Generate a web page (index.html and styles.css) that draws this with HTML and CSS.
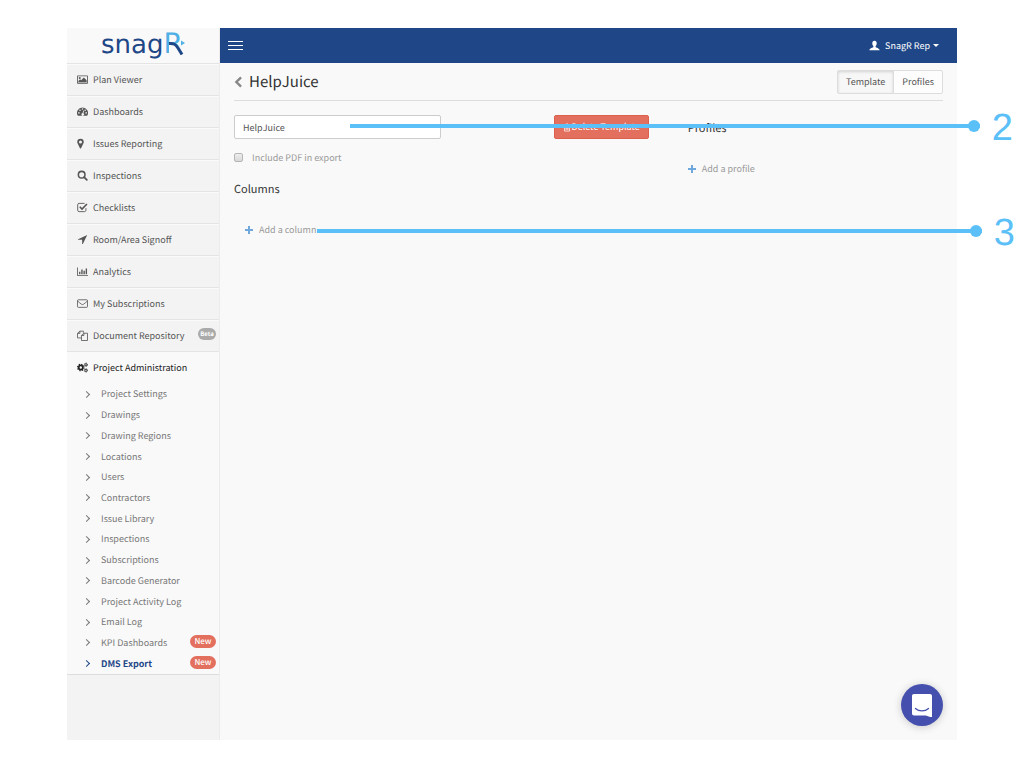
FILE: index.html
```html
<!DOCTYPE html>
<html lang="en">
<head>
    <meta charset="UTF-8">
    <meta name="viewport" content="width=device-width, initial-scale=1.0">
    <title>DMS Export - HelpJuice</title>
    <link rel="stylesheet" href="styles.css">
</head>
<body>
    <div class="app">
        <aside class="sidebar">
            <a class="logo" href="#">
                <span class="logo-snag">snag</span><span class="logo-r">R<svg class="logo-mark" viewBox="0 0 24 24"><path d="M6 13h9l7 11H6z" fill="#f9f9f9"/><path d="M6 11.500c5-.5 7 1 9 4.500l4 6.500" stroke="#1f4788" stroke-width="3" fill="none"/><path d="M18 8.500l4 2.500-4 2.500z" fill="#4fb0e5"/></svg></span>
            </a>
            <nav>
                <a class="nav-item" href="#"><svg class="icon" viewBox="0 0 16 16"><path fill-rule="evenodd" d="M1.500 2h13c.8 0 1.500.6 1.500 1.400v9.200c0 .8-.7 1.400-1.500 1.400h-13C.7 14 0 13.400 0 12.600V3.400C0 2.600.7 2 1.500 2zM1.200 3.200v9.600h13.600V3.200z"/><circle cx="4" cy="5.800" r="1.500"/><path d="M2 12V10l2.500-2.500L6 9l4-4 4 4v3z"/></svg>Plan Viewer</a>
                <a class="nav-item" href="#"><svg class="icon" viewBox="0 0 16 16"><path d="M8 2a8 8 0 0 0-6.700 12.300h13.400A8 8 0 0 0 8 2z"/><g fill="#f3f3f3"><circle cx="2.800" cy="10" r="1.100"/><circle cx="4.400" cy="6.200" r="1.100"/><circle cx="8" cy="4.500" r="1.100"/><circle cx="11.800" cy="6.200" r="1.100"/><circle cx="13.300" cy="10" r="1.100"/><path d="M9.300 6.500l1 .3-1 3.600a2 2 0 1 1-1.200-.2z"/></g></svg>Dashboards</a>
                <a class="nav-item" href="#"><svg class="icon icon-left" viewBox="0 0 16 16"><path fill-rule="evenodd" d="M8 1a4.700 4.700 0 0 0-4.700 4.700c0 1.300.4 2 .8 2.800L7.200 15c.3.600 1.300.6 1.600 0l3.100-6.500c.4-.8.8-1.500.8-2.800A4.700 4.700 0 0 0 8 1zm0 2.500a2.200 2.200 0 1 1 0 4.400 2.200 2.200 0 0 1 0-4.400z"/></svg>Issues Reporting</a>
                <a class="nav-item" href="#"><svg class="icon" viewBox="0 0 16 16"><circle cx="6.800" cy="6.800" r="4.800" fill="none" stroke="currentColor" stroke-width="2.200"/><path d="M10.300 10.300l4 4" stroke="currentColor" stroke-width="2.600" stroke-linecap="round"/></svg>Inspections</a>
                <a class="nav-item" href="#"><svg class="icon" viewBox="0 0 16 16"><path d="M13 9v3c0 1.200-.8 2-2 2H3c-1.200 0-2-.8-2-2V4c0-1.200.8-2 2-2h8" fill="none" stroke="currentColor" stroke-width="1.300"/><path d="M4 7l3.300 3.300L14.500 3" fill="none" stroke="currentColor" stroke-width="2.300"/></svg>Checklists</a>
                <a class="nav-item" href="#"><svg class="icon" viewBox="0 0 16 16"><path d="M14.800 1.500L8.500 14.400c-.3.500-1 .4-1-.2V8.500H1.800c-.6 0-.7-.8-.2-1z"/></svg>Room/Area Signoff</a>
                <a class="nav-item" href="#"><svg class="icon" viewBox="0 0 16 16"><path d="M0 2h1.200v11H16v1.200H0zM3 8.500h2V12H3zM6.200 5h2v7h-2zM9.400 7h2v5h-2zM12.600 3.500h2V12h-2z"/></svg>Analytics</a>
                <a class="nav-item" href="#"><svg class="icon" viewBox="0 0 16 16"><rect x=".7" y="2.600" width="14.600" height="11" rx="1.300" fill="none" stroke="currentColor" stroke-width="1.200"/><path d="M1 4.500c2 2.100 4.200 3.500 5.600 4.600.8.6 2 .6 2.800 0C10.800 8 13 6.600 15 4.500" fill="none" stroke="currentColor" stroke-width="1.200"/></svg>My Subscriptions</a>
                <a class="nav-item" href="#"><svg class="icon" viewBox="0 0 16 16"><path d="M6 11.500H.7V5L4 1.700h5.300V4M4.200 1.700V5H.7M6.500 8l3.300-3.300h5.500v10.600H6.500zM10 4.700V8H6.500" fill="none" stroke="currentColor" stroke-width="1.200"/></svg>Document Repository<span class="badge badge-beta">Beta</span></a>
                <a class="nav-item nav-open" href="#"><svg class="icon" viewBox="0 0 16 16"><circle cx="5.500" cy="8" r="3" fill="none" stroke="currentColor" stroke-width="2.500"/><circle cx="5.500" cy="8" r="4.800" fill="none" stroke="currentColor" stroke-width="1.500" stroke-dasharray="2 1.770"/><circle cx="13" cy="4" r="1.600" fill="none" stroke="currentColor" stroke-width="1.300"/><circle cx="13" cy="4" r="2.600" fill="none" stroke="currentColor" stroke-dasharray="1.300 1.400"/><circle cx="13" cy="12.200" r="1.600" fill="none" stroke="currentColor" stroke-width="1.300"/><circle cx="13" cy="12.200" r="2.600" fill="none" stroke="currentColor" stroke-dasharray="1.300 1.400"/></svg>Project Administration</a>
                <ul class="subnav">
                    <li><a href="#">Project Settings</a></li>
                    <li><a href="#">Drawings</a></li>
                    <li><a href="#">Drawing Regions</a></li>
                    <li><a href="#">Locations</a></li>
                    <li><a href="#">Users</a></li>
                    <li><a href="#">Contractors</a></li>
                    <li><a href="#">Issue Library</a></li>
                    <li><a href="#">Inspections</a></li>
                    <li><a href="#">Subscriptions</a></li>
                    <li><a href="#">Barcode Generator</a></li>
                    <li><a href="#">Project Activity Log</a></li>
                    <li><a href="#">Email Log</a></li>
                    <li><a href="#">KPI Dashboards<span class="badge badge-new">New</span></a></li>
                    <li><a class="active" href="#">DMS Export<span class="badge badge-new">New</span></a></li>
                </ul>
            </nav>
        </aside>

        <div class="page">
            <header class="topbar">
                <button class="menu-toggle" type="button" aria-label="Toggle menu"><span></span><span></span><span></span></button>
                <button class="user-menu" type="button"><svg class="user-icon" viewBox="0 0 16 16"><path d="M8 1C5.800 1 4.800 2.600 4.800 4.800c0 1.800.6 3.200 1.600 4v1.400c-.3.900-5.600 1.500-5.900 4.800h15c-.3-3.300-5.600-3.900-5.900-4.800V8.800c1-.8 1.600-2.200 1.600-4C11.200 2.600 10.200 1 8 1z"/></svg>SnagR Rep<span class="caret"></span></button>
            </header>

            <main class="content">
                <div class="title-row">
                    <a class="back" href="#" aria-label="Back"><svg viewBox="0 0 10 14"><path d="M8 1.500L2.500 7 8 12.500" fill="none" stroke="currentColor" stroke-width="2.800"/></svg></a>
                    <h1>HelpJuice</h1>
                    <div class="btn-group">
                        <button class="btn pressed" type="button">Template</button>
                        <button class="btn" type="button">Profiles</button>
                    </div>
                </div>

                <div class="columns">
                    <section class="template">
                        <div class="name-row">
                            <input class="name-input" type="text" value="HelpJuice" aria-label="Template name">
                            <button class="btn-danger" type="button"><svg viewBox="0 0 14 16"><path d="M1 4h12M4.500 4l.8-2.300h3.400L9.500 4M2.500 4v10.300h9V4M5.300 6.500v5.500M7 6.500v5.500M8.700 6.500v5.500" fill="none" stroke="currentColor" stroke-width="1.300"/></svg>Delete Template</button>
                        </div>
                        <div class="check-row">
                            <input type="checkbox" id="includePdf">
                            <label for="includePdf">Include PDF in export</label>
                        </div>
                        <h2>Columns</h2>
                        <a class="add-link add-column" href="#"><svg viewBox="0 0 8 8"><path d="M4 0v8M0 4h8" stroke="currentColor" stroke-width="2"/></svg>Add a column</a>
                    </section>
                    <section class="profiles">
                        <h2>Profiles</h2>
                        <a class="add-link" href="#"><svg viewBox="0 0 8 8"><path d="M4 0v8M0 4h8" stroke="currentColor" stroke-width="2"/></svg>Add a profile</a>
                    </section>
                </div>
            </main>
        </div>

        <button class="chat" type="button" aria-label="Open chat"><svg viewBox="0 0 20 23"><path d="M2 0h16c1.200 0 2 .8 2 2v21c-2.400-.2-4.400-.8-6.200-1.600H2c-1.200 0-2-.8-2-2V2C0 .8.800 0 2 0z" fill="#fff"/><path d="M3.500 14.500c3.500 3.200 9.500 3.200 13 0" fill="none" stroke="#444fae" stroke-width="1.300" stroke-linecap="round"/></svg></button>
    </div>

    <div class="callout callout-name"><span class="line"></span><span class="number">2</span></div>
    <div class="callout callout-column"><span class="line"></span><span class="number">3</span></div>
</body>
</html>
```
FILE: styles.css
```css
* {
    margin: 0;
    padding: 0;
    box-sizing: border-box;
}

body {
    position: relative;
    min-height: 100vh;
    padding: 28px 67px;
    background: #fff;
    color: #555;
    font-family: "Noto Sans CJK SC", "Noto Sans", sans-serif;
    font-size: 9px;
    line-height: 16px;
    text-rendering: geometricPrecision;
}

a {
    color: inherit;
    text-decoration: none;
}

button,
input {
    font: inherit;
    color: inherit;
    text-rendering: inherit;
}

svg {
    fill: currentColor;
    flex: none;
}

.app {
    position: relative;
    display: flex;
    min-height: calc(100vh - 56px);
    background: #f9f9f9;
}

/* Sidebar */
.sidebar {
    width: 153px;
    flex: none;
    background: #f3f3f3;
    border-right: 1px solid #ececec;
}

.logo {
    display: flex;
    align-items: baseline;
    height: 36px;
    padding-left: 34px;
    background: #f9f9f9;
    border-bottom: 1px solid #e4e4e4;
    color: #1f4788;
    font-family: "DejaVu Sans", sans-serif;
    font-size: 26px;
    line-height: 32px;
}

.logo-r {
    position: relative;
    color: #4fb0e5;
    font-size: 28px;
}

.logo-mark {
    position: absolute;
    left: 0;
    top: 4px;
    width: 24px;
    height: 24px;
}

.nav-item {
    display: flex;
    align-items: center;
    height: 32px;
    padding: 0 3px 1px 10px;
    border-top: 1px solid #fafafa;
    border-bottom: 1px solid #e4e4e4;
}

.icon {
    width: 11px;
    height: 11px;
    margin-right: 5px;
}

.icon-left {
    margin-left: -2px;
    margin-right: 7px;
}

.nav-open {
    background: #f9f9f9;
    border-color: #f9f9f9;
    color: #222;
}

.badge {
    margin-left: auto;
    border-radius: 8px;
    color: #fff;
    text-align: center;
}

.badge-beta {
    width: 18px;
    height: 12px;
    margin-bottom: 3px;
    background: #aaa;
    font-size: 6px;
    font-weight: bold;
    line-height: 12px;
}

.badge-new {
    width: 26px;
    height: 13px;
    margin-bottom: 2px;
    background: #e36f5e;
    font-size: 8px;
    font-weight: 500;
    line-height: 13px;
}

.subnav {
    display: flex;
    flex-direction: column;
    height: 291px;
    background: #f9f9f9;
    border-bottom: 1px solid #ddd;
    color: #777;
    list-style: none;
}

.subnav li {
    flex: 1;
}

.subnav a {
    display: flex;
    align-items: center;
    height: 100%;
    padding: 0 3px 0 17px;
}

.subnav a::before {
    content: "";
    width: 4px;
    height: 4px;
    margin-right: 12px;
    border-top: 1px solid;
    border-right: 1px solid;
    transform: rotate(45deg);
}

.subnav .active {
    color: #1f4788;
    font-weight: bold;
}

/* Top bar */
.page {
    flex: 1;
    min-width: 0;
}

.topbar {
    display: flex;
    align-items: center;
    justify-content: space-between;
    height: 35px;
    padding: 0 18px 0 8px;
    background: #1f4788;
    color: #fff;
}

.menu-toggle,
.user-menu {
    background: none;
    border: none;
    cursor: pointer;
}

.menu-toggle {
    display: flex;
    flex-direction: column;
    gap: 3px;
    width: 15px;
}

.menu-toggle span {
    height: 1px;
    background: #fff;
}

.user-menu {
    display: flex;
    align-items: center;
}

.user-icon {
    width: 11px;
    height: 11px;
    margin-right: 5px;
}

.caret {
    margin-left: 3px;
    border: 3px solid transparent;
    border-top-color: #fff;
    border-bottom: 0;
}

/* Content */
.content {
    padding: 0 14px;
}

.title-row {
    display: flex;
    align-items: center;
    height: 38px;
    border-bottom: 1px solid #ddd;
}

.back {
    display: flex;
    margin-right: 6px;
    color: #888;
}

.back svg {
    width: 9px;
    height: 12px;
}

h1 {
    flex: 1;
    color: #333;
    font-size: 15px;
    font-weight: 400;
    line-height: 24px;
}

h2 {
    color: #333;
    font-size: 11px;
    font-weight: 400;
    line-height: 18px;
}

.btn-group {
    display: flex;
}

.btn {
    height: 24px;
    padding: 0 8px;
    background: #fdfdfd;
    border: 1px solid #ddd;
    border-radius: 0 2px 2px 0;
    cursor: pointer;
}

.btn.pressed {
    margin-right: -1px;
    background: #f7f7f7;
    border-radius: 2px 0 0 2px;
    box-shadow: inset 0 1px 3px rgba(0, 0, 0, 0.15);
}

.columns {
    display: grid;
    grid-template-columns: 64% 1fr;
    padding-top: 14px;
}

.template {
    padding-right: 39px;
}

.name-row {
    display: flex;
    justify-content: space-between;
}

.name-input {
    width: 50%;
    height: 24px;
    padding: 0 8px;
    background: #fff;
    border: 1px solid #ccc;
    border-radius: 2px;
}

.btn-danger {
    display: flex;
    align-items: center;
    height: 24px;
    padding: 0 8px;
    background: #e36f5e;
    border: 1px solid #dd604e;
    border-radius: 2px;
    color: #fff;
    cursor: pointer;
}

.btn-danger svg {
    width: 8px;
    height: 9px;
    margin-right: 1px;
}

.check-row {
    display: flex;
    align-items: center;
    margin: 11px 0 14px;
    color: #999;
}

.check-row input {
    appearance: none;
    width: 9px;
    height: 9px;
    margin: 0 9px 2px 0;
    background: linear-gradient(#eee, #d8d8d8);
    border: 1px solid #b5b5b5;
    border-radius: 2px;
}

.add-link {
    display: flex;
    align-items: center;
    color: #999;
}

.add-link svg {
    width: 8px;
    height: 8px;
    margin-right: 6px;
    color: #6fa8dc;
}

.add-column {
    margin: 24px 0 0 11px;
}

.profiles h2 {
    margin: 4px 0 24px;
}

.chat {
    position: absolute;
    right: 14px;
    bottom: 14px;
    display: flex;
    align-items: center;
    justify-content: center;
    width: 42px;
    height: 42px;
    background: #444fae;
    border: none;
    border-radius: 50%;
    box-shadow: 0 1px 8px rgba(0, 0, 0, 0.2);
    cursor: pointer;
}

.chat svg {
    width: 20px;
    height: 23px;
}

/* Numbered callouts over the page */
.callout {
    position: absolute;
    display: flex;
    align-items: center;
    height: 40px;
    color: #5bc0f8;
    font-family: "Liberation Sans", Arial, sans-serif;
    font-size: 38px;
    line-height: 40px;
}

.number {
    padding-top: 4px;
}

.callout-name {
    top: 106px;
    left: 350px;
    right: 11px;
}

.callout-column {
    top: 211px;
    left: 317px;
    right: 9px;
}

.line {
    position: relative;
    flex: 1;
    height: 4px;
    margin-right: 12px;
    background: currentColor;
}

.line::after {
    content: "";
    position: absolute;
    top: -4px;
    right: 0;
    width: 12px;
    height: 12px;
    background: currentColor;
    border-radius: 50%;
}
```
